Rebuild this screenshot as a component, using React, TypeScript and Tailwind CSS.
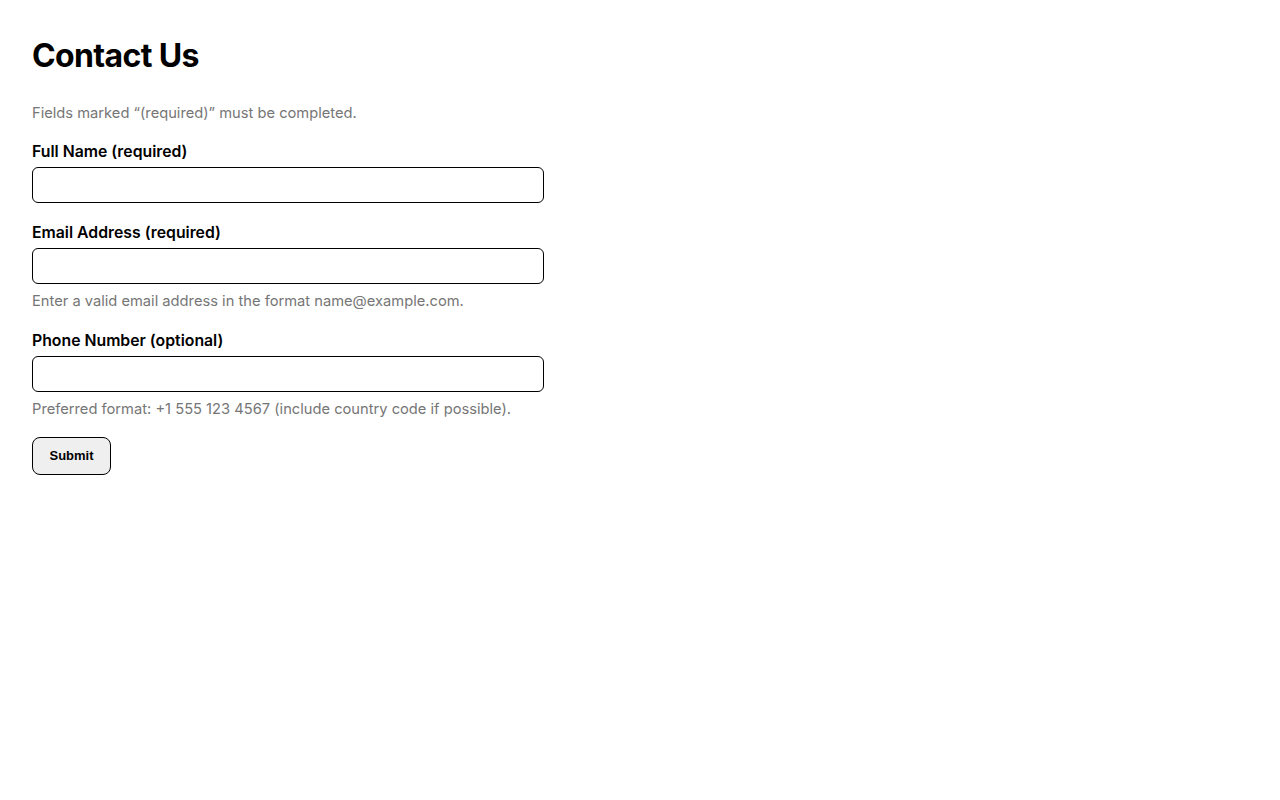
import React from 'react';

const font = { fontFamily: 'Inter, "Noto Sans", sans-serif' };

function Field({ id, label, type, hint }: { id: string; label: string; type: string; hint?: string }) {
    return (
        <div className="flex flex-col">
            <label htmlFor={id} className="text-[15.8px] leading-5 font-semibold text-black pt-px mb-[5px]">
                {label}
            </label>
            <input
                id={id}
                type={type}
                className="w-[512px] h-[36px] rounded-[6px] border border-black bg-white px-2 text-[15px] outline-none"
            />
            {hint && <p className="text-[14.7px] leading-5 text-[#767676] mt-[7px]">{hint}</p>}
        </div>
    );
}

export default function App() {
    return (
        <div className="min-h-screen bg-white p-8 text-black" style={font}>
            <h1 className="text-[32px] leading-[48px] font-bold tracking-[-0.02em] mb-[23px]">Contact Us</h1>
            <p className="text-[14.7px] leading-5 text-[#767676] mb-[18px]">
                Fields marked “(required)” must be completed.
            </p>
            <form className="flex flex-col gap-[19px]" onSubmit={(e) => e.preventDefault()}>
                <Field id="name" label="Full Name (required)" type="text" />
                <Field
                    id="email"
                    label="Email Address (required)"
                    type="email"
                    hint="Enter a valid email address in the format name@example.com."
                />
                <Field
                    id="phone"
                    label="Phone Number (optional)"
                    type="tel"
                    hint="Preferred format: +1 555 123 4567 (include country code if possible)."
                />
                <div className="-mt-[1px]">
                    <button
                        type="submit"
                        className="h-[38px] w-[79px] rounded-[8px] border border-black bg-[#efefef] text-[13px] font-bold"
                        style={{ fontFamily: 'Arial, "Liberation Sans", sans-serif' }}
                    >
                        Submit
                    </button>
                </div>
            </form>
        </div>
    );
}
